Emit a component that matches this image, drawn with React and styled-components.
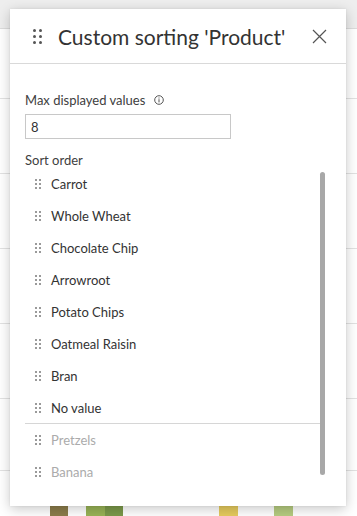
import React from "react";
import styled, { createGlobalStyle } from "styled-components";

const Global = createGlobalStyle`
  html, body { margin: 0; padding: 0; }
  body {
    width: 357px; height: 516px; overflow: hidden; background: #fff;
    font-family: "Source Sans Pro", Lato, "Noto Sans", sans-serif;
  }
`;

const Stage = styled.div`
  position: relative;
  width: 357px;
  height: 516px;
  overflow: hidden;
`;

const Backdrop = styled.div`
  display: flex;
  flex-direction: column;
  height: 100%;
`;

const TopBand = styled.div`
  height: 28px;
  background: #eeeeee;
  border-bottom: 1px solid #dcdcdc;
  flex: none;
`;

const GridRow = styled.div`
  flex: none;
  border-bottom: 1px solid #e2e2e2;
`;

const BarRow = styled.div`
  flex: 1;
  position: relative;
  display: flex;
  align-items: flex-end;
`;

const Bar = styled.div`
  position: absolute;
  bottom: 0;
  height: 12px;
  left: ${(p) => p.$x}px;
  width: ${(p) => p.$w}px;
  background: ${(p) => p.$c};
`;

const Dialog = styled.div`
  position: absolute;
  left: 10px;
  top: 9px;
  width: 336px;
  height: 497px;
  background: #fff;
  box-shadow: 0 3px 12px rgba(0, 0, 0, 0.22), 0 0 2px rgba(0, 0, 0, 0.08);
  display: flex;
  flex-direction: column;
`;

const Header = styled.div`
  height: 54px;
  flex: none;
  border-bottom: 1px solid #d9d9d9;
  display: flex;
  align-items: center;
  padding-left: 23px;
  padding-right: 19px;
`;

const Title = styled.h1`
  margin: 0 0 0 16px;
  flex: 1;
  font-size: 21px;
  font-weight: 400;
  color: #333;
  white-space: nowrap;
`;

const CloseButton = styled.button`
  border: 0;
  background: none;
  padding: 0;
  width: 15px;
  height: 15px;
  display: flex;
  cursor: pointer;
`;

const Body = styled.div`
  flex: 1;
  display: flex;
  flex-direction: column;
  padding: 28px 0 0 15px;
  min-height: 0;
`;

const Label = styled.div`
  display: flex;
  align-items: center;
  gap: 9px;
  font-size: 13px;
  color: #404040;
  line-height: 16px;
  height: 16px;
`;

const Input = styled.div`
  margin-top: 6px;
  width: 206px;
  height: 25px;
  box-sizing: border-box;
  border: 1px solid #c8c8c8;
  padding: 0 5px;
  font-size: 13px;
  color: #333;
  display: flex;
  align-items: center;
`;

const SortLabel = styled(Label)`
  margin-top: 13px;
`;

const ListArea = styled.div`
  display: flex;
`;

const List = styled.div`
  width: 295px;
  display: flex;
  flex-direction: column;
`;

const Item = styled.div`
  height: 32px;
  box-sizing: border-box;
  display: flex;
  align-items: center;
  gap: 10px;
  padding-left: 10px;
  font-size: 13px;
  color: ${(p) => (p.$muted ? "#ababab" : "#333")};
  border-bottom: ${(p) => (p.$divider ? "1px solid #d6d6d6" : "none")};
`;

const ScrollThumb = styled.div`
  width: 5px;
  height: 303px;
  margin-top: 4px;
  border-radius: 3px;
  background: #a8a8a8;
`;

const Grip = ({ size = 2, gap = 3, color = "#9a9a9a" }) => {
  const dots = [];
  for (let r = 0; r < 3; r++)
    for (let c = 0; c < 2; c++)
      dots.push(
        <circle
          key={`${r}-${c}`}
          cx={size / 2 + c * (size + gap)}
          cy={size / 2 + r * (size + gap)}
          r={size / 2}
          fill={color}
        />
      );
  const w = size * 2 + gap;
  const h = size * 3 + gap * 2;
  return (
    <svg width={w} height={h} viewBox={`0 0 ${w} ${h}`} style={{ flex: "none" }}>
      {dots}
    </svg>
  );
};

const ItemGrip = () => (
  <svg width="6" height="10" viewBox="0 0 6 10" style={{ flex: "none" }}>
    {[0, 4, 8].map((y) =>
      [0, 4].map((x) => <rect key={`${x}-${y}`} x={x} y={y} width="2" height="2" fill="#9a9a9a" />)
    )}
  </svg>
);

const InfoIcon = () => (
  <svg width="10" height="10" viewBox="0 0 10 10">
    <circle cx="5" cy="5" r="4.3" fill="none" stroke="#555" strokeWidth="1" />
    <rect x="4.5" y="4.2" width="1" height="3.2" fill="#555" />
    <rect x="4.5" y="2.5" width="1" height="1" fill="#555" />
  </svg>
);

const CloseIcon = () => (
  <svg width="15" height="15" viewBox="0 0 15 15">
    <path d="M1 1 L14 14 M14 1 L1 14" stroke="#555" strokeWidth="1.2" fill="none" />
  </svg>
);

const rows = [70, 75, 75, 75, 75, 72];
const bars = [
  { x: 50, w: 18, c: "#8c7d4b" },
  { x: 86, w: 19, c: "#98b356" },
  { x: 105, w: 18, c: "#7b994a" },
  { x: 219, w: 19, c: "#e6cb5e" },
  { x: 274, w: 19, c: "#b6cc80" },
];

const items = [
  "Carrot",
  "Whole Wheat",
  "Chocolate Chip",
  "Arrowroot",
  "Potato Chips",
  "Oatmeal Raisin",
  "Bran",
  "No value",
];
const hidden = ["Pretzels", "Banana"];

export default function App() {
  return (
    <Stage>
      <Global />
      <Backdrop>
        <TopBand />
        {rows.map((h, i) => (
          <GridRow key={i} style={{ height: h - 1 }} />
        ))}
        <BarRow>
          {bars.map((b, i) => (
            <Bar key={i} $x={b.x} $w={b.w} $c={b.c} />
          ))}
        </BarRow>
      </Backdrop>
      <Dialog>
        <Header>
          <Grip size={3} gap={3} color="#555" />
          <Title>Custom sorting 'Product'</Title>
          <CloseButton aria-label="Close">
            <CloseIcon />
          </CloseButton>
        </Header>
        <Body>
          <Label>
            Max displayed values <InfoIcon />
          </Label>
          <Input>8</Input>
          <SortLabel>Sort order</SortLabel>
          <ListArea>
            <List>
              {items.map((t, i) => (
                <Item key={t} $divider={i === items.length - 1}>
                  <ItemGrip />
                  {t}
                </Item>
              ))}
              {hidden.map((t) => (
                <Item key={t} $muted>
                  <ItemGrip />
                  {t}
                </Item>
              ))}
            </List>
            <ScrollThumb />
          </ListArea>
        </Body>
      </Dialog>
    </Stage>
  );
}
